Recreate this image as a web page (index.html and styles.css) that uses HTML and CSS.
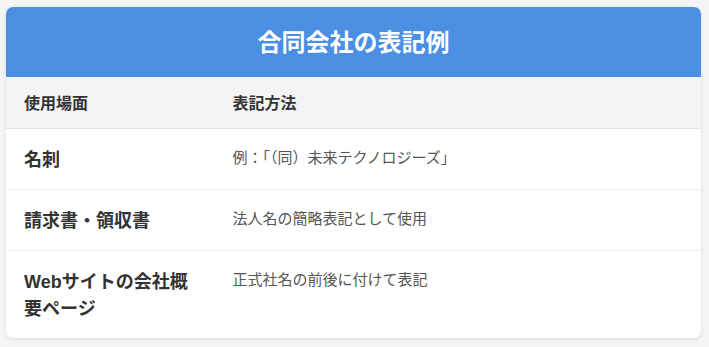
FILE: index.html
```html
<!DOCTYPE html>
<html lang="ja">
<head>
<meta charset="utf-8">
<link rel="stylesheet" href="styles.css">
</head>
<body>
<div class="card">
  <h2 class="title">合同会社の表記例</h2>
  <table class="tbl">
    <thead>
      <tr><th class="c1">使用場面</th><th>表記方法</th></tr>
    </thead>
    <tbody>
      <tr><td class="c1">名刺</td><td>例：「（同）未来テクノロジーズ」</td></tr>
      <tr><td class="c1">請求書・領収書</td><td>法人名の簡略表記として使用</td></tr>
      <tr><td class="c1">Webサイトの会社概要ページ</td><td>正式社名の前後に付けて表記</td></tr>
    </tbody>
  </table>
</div>
</body>
</html>
```

FILE: styles.css
```css
html, body { margin: 0; padding: 0; }
body {
  background: #f4f5f7;
  font-family: "Liberation Sans", "Noto Sans CJK JP", sans-serif;
  color: #333;
  padding: 7px 8px 10px 6px;
}
.card {
  background: #fff;
  border-radius: 7px;
  overflow: hidden;
  box-shadow: 0 1px 4px rgba(0,0,0,0.10);
}
.title {
  margin: 0;
  background: #4a8fe2;
  color: #fff;
  text-align: center;
  font-size: 24px;
  font-weight: 700;
  line-height: 36px;
  padding: 18px 0 16px;
}
.tbl {
  width: 100%;
  border-collapse: collapse;
}
.tbl th {
  background: #f3f4f6;
  text-align: left;
  font-size: 16px;
  font-weight: 700;
  color: #333;
  padding: 15px 18px 12px;
  line-height: 24px;
  border-bottom: 1px solid #e2e4e8;
}
.tbl td {
  vertical-align: top;
  padding: 17px 18px 16px;
  font-size: 15px;
  line-height: 24px;
  color: #555;
  border-bottom: 1px solid #eceef1;
}
.tbl tr:last-child td { border-bottom: none; }
.tbl .c1 { width: 30%; }
.tbl td.c1 {
  font-size: 18px;
  font-weight: 700;
  color: #333;
  line-height: 27px;
  padding-top: 18px;
  padding-bottom: 15px;
}
```
